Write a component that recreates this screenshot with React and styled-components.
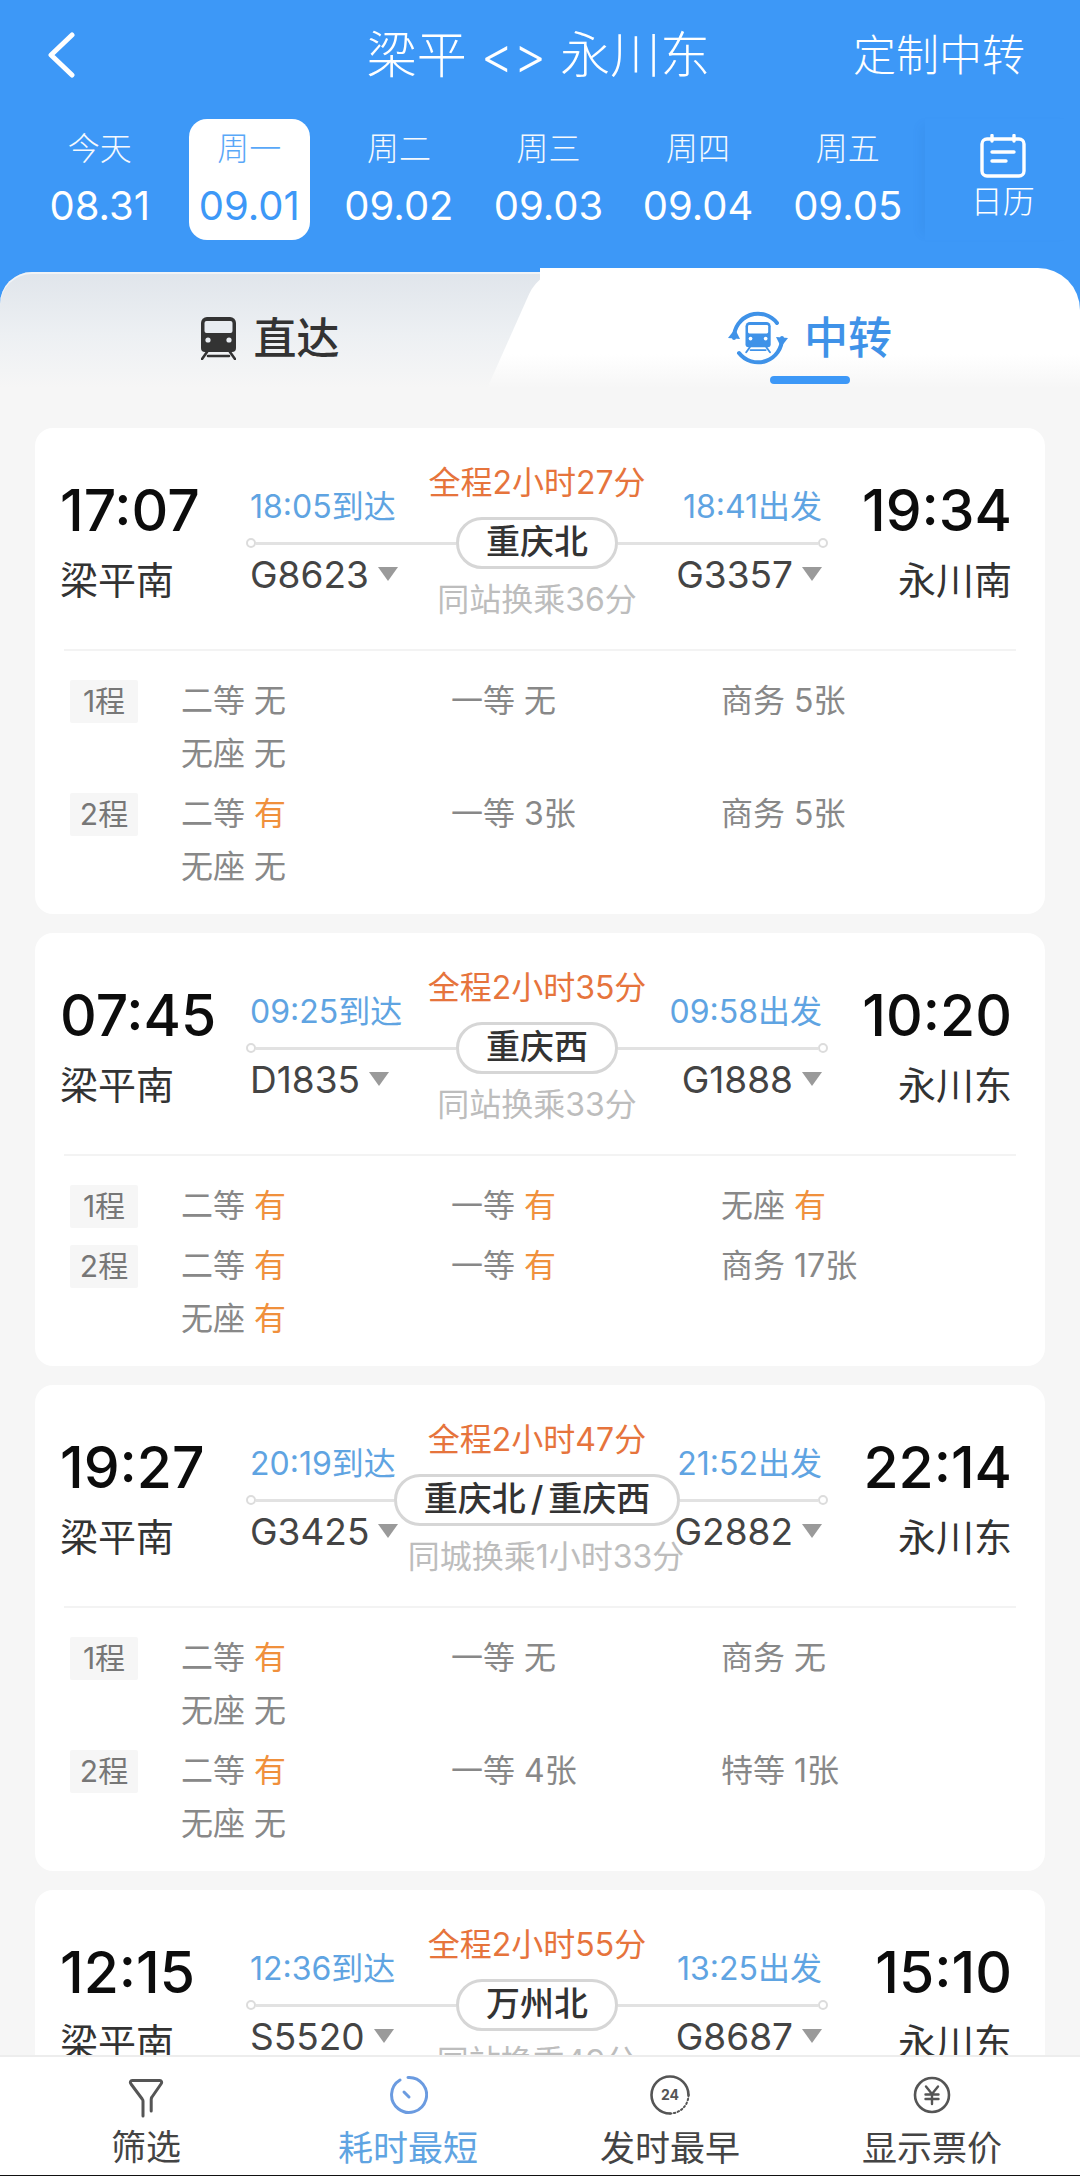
import React from "react";
import styled, { createGlobalStyle } from "styled-components";

const Global = createGlobalStyle`
  html, body { margin: 0; padding: 0; background: #f6f6f6; }
  * { box-sizing: border-box; }
`;

const BLUE = "#3d98f7";

const Page = styled.div`
  width: 1080px;
  height: 2176px;
  display: flex;
  flex-direction: column;
  overflow: hidden;
  background: #f6f6f6;
  font-family: Inter, "Noto Sans CJK SC", sans-serif;
`;

const Header = styled.header`
  flex: none;
  height: 268px;
  background: ${BLUE};
  color: #fff;
`;

const TitleRow = styled.div`
  height: 119px;
  padding: 0 55px 9px 46px;
  display: grid;
  grid-template-columns: 1fr auto 1fr;
  align-items: center;
`;

const BackButton = styled.div`
  display: flex;
  align-items: center;
`;

const Title = styled.h1`
  margin: 0 0 0 6px;
  font-size: 50px;
  font-weight: 300;
  line-height: 60px;
  white-space: pre;
`;

const Custom = styled.div`
  justify-self: end;
  font-size: 43px;
  font-weight: 300;
  line-height: 60px;
`;

const DateRow = styled.div`
  display: flex;
  padding-left: 25px;
`;

const DateCell = styled.div`
  width: 150px;
  height: 121px;
  display: flex;
  flex-direction: column;
  align-items: center;
  padding-top: 9px;
`;

const DateInner = styled.div`
  width: 121px;
  height: 121px;
  margin-top: -9px;
  padding-top: 10px;
  border-radius: 18px;
  text-align: center;
  background: ${(p) => (p.$active ? "#fff" : "transparent")};
  color: ${(p) => (p.$active ? BLUE : "#fff")};
`;

const DateLabel = styled.div`
  font-size: 32px;
  line-height: 40px;
  font-weight: 300;
  opacity: ${(p) => (p.$active ? 0.85 : 0.95)};
`;

const DateValue = styled.div`
  margin: 17px -10px 0;
  font-size: 40px;
  line-height: 40px;
  white-space: nowrap;
`;

const CalendarCell = styled.div`
  width: 155px;
  height: 121px;
  margin-left: 3px;
  display: flex;
  flex-direction: column;
  align-items: center;
  padding-top: 15px;
  box-shadow: -10px 0 10px -6px rgba(30, 90, 160, 0.07);
`;

const CalendarLabel = styled.div`
  font-size: 32px;
  line-height: 36px;
  font-weight: 300;
  margin-top: 6px;
`;

const TabBar = styled.div`
  flex: none;
  height: 120px;
  background: ${BLUE};
  display: grid;
  grid-template-columns: 540px 540px;
`;

const DirectTab = styled.div`
  margin-top: 4px;
  margin-right: -60px;
  padding-right: 60px;
  border-radius: 32px 0 0 0;
  background: linear-gradient(#e0e5eb 0%, #edf0f3 55%, #f6f6f6 100%);
  box-shadow: inset 0 2px 0 rgba(255, 255, 255, 0.55);
  display: flex;
  align-items: center;
  justify-content: center;
  gap: 18px;
  padding-top: 16px;
  font-size: 43px;
  font-weight: 500;
  line-height: 60px;
  color: #333;
`;

const TransferTab = styled.div`
  position: relative;
  z-index: 1;
  border-radius: 0 42px 0 0;
  background: linear-gradient(#fff 0%, #fff 72%, #f6f6f6 100%);
  display: flex;
  align-items: center;
  justify-content: center;
  gap: 16px;
  padding-top: 20px;
  font-size: 44px;
  font-weight: 500;
  line-height: 60px;
  color: #3f92e8;

  &::before {
    content: "";
    position: absolute;
    top: 0;
    bottom: 0;
    left: -26px;
    width: 80px;
    border-radius: 26px 0 0 0;
    background: inherit;
    transform: skewX(-24deg);
    z-index: -1;
  }
`;

const TabUnderline = styled.span`
  position: absolute;
  left: 230px;
  bottom: 4px;
  width: 80px;
  height: 8px;
  border-radius: 4px;
  background: ${BLUE};
`;

const List = styled.main`
  flex: 1;
  min-height: 0;
  overflow: hidden;
  padding: 40px 35px 0;
  display: flex;
  flex-direction: column;
  gap: 19px;
`;

const Card = styled.article`
  flex: none;
  background: #fff;
  border-radius: 18px;
  padding: 34px 29px 21px;
`;

const TopRow = styled.div`
  display: grid;
  grid-template-columns: 186px 582px 1fr;
  margin: 0 4px 0 -4px;
  height: 154px;
`;

const Endpoint = styled.div`
  display: flex;
  flex-direction: column;
  align-items: ${(p) => (p.$end ? "flex-end" : "flex-start")};
`;

const Time = styled.div`
  margin-top: 20px;
  font-size: 57px;
  line-height: 58px;
  font-weight: 500;
  color: #0c0c0c;
  white-space: nowrap;
`;

const Station = styled.div`
  margin-top: 20px;
  font-size: 38px;
  line-height: 40px;
  color: #333;
`;

const Route = styled.div`
  display: grid;
  grid-template-columns: repeat(3, minmax(0, 1fr));
  grid-template-rows: 55px 52px auto;
`;

const StopTime = styled.div`
  align-self: end;
  margin: ${(p) => (p.$end ? "0 6px 0 0" : "0 0 0 4px")};
  font-size: 32px;
  line-height: 20px;
  white-space: nowrap;
  color: #5fa4e2;
  justify-self: ${(p) => (p.$end ? "end" : "start")};
`;

const Duration = styled.div`
  justify-self: center;
  align-self: start;
  font-size: 32px;
  line-height: 40px;
  white-space: nowrap;
  color: #e6743c;
  margin-top: 1px;
`;

const Track = styled.div`
  grid-column: 1 / -1;
  display: flex;
  align-items: center;
`;

const Dot = styled.span`
  flex: none;
  width: 10px;
  height: 10px;
  border-radius: 50%;
  border: 2px solid #dcdcdc;
  background: #fff;
`;

const Line = styled.span`
  flex: 1;
  height: 3px;
  background: #e2e2e2;
`;

const Hub = styled.div`
  flex: none;
  height: 52px;
  padding: 0 27px;
  border: 3px solid #d6d6d6;
  border-radius: 26px;
  font-size: 34px;
  line-height: 44px;
  font-weight: 500;
  word-spacing: -4px;
  color: #333;
  white-space: nowrap;
`;

const Train = styled.div`
  display: flex;
  align-items: center;
  gap: 9px;
  justify-self: ${(p) => (p.$end ? "end" : "start")};
  margin: ${(p) => (p.$end ? "-13px 6px 0 0" : "-13px 0 0 4px")};
  height: 38px;
  font-size: 37px;
  line-height: 38px;
  color: #444;
  white-space: nowrap;
`;

const Caret = styled.span`
  width: 0;
  height: 0;
  margin-top: -2px;
  border-left: 10px solid transparent;
  border-right: 10px solid transparent;
  border-top: 14px solid #9a9a9a;
`;

const Transfer = styled.div`
  justify-self: center;
  margin-top: 13px;
  margin-left: ${(p) => p.$nudge || 0}px;
  font-size: 32px;
  line-height: 36px;
  color: #bdbdbd;
  white-space: nowrap;
`;

const Divider = styled.div`
  height: 2px;
  background: #f3f3f3;
  margin-top: 33px;
`;

const SeatBlock = styled.div`
  padding-top: 23px;
  display: flex;
  flex-direction: column;
  gap: 7px;
`;

const Leg = styled.div`
  display: grid;
  grid-template-columns: 117px 270px 270px 270px;
  grid-auto-rows: 53px;
  align-items: center;
`;

const LegTag = styled.div`
  grid-row: 1;
  grid-column: 1;
  align-self: start;
  margin: 6px 0 0 6px;
  width: 68px;
  height: 43px;
  background: #f6f6f6;
  font-size: 30px;
  line-height: 43px;
  text-align: center;
  color: #777;
  border-radius: 2px;
`;

const Seat = styled.div`
  font-size: 32px;
  line-height: 40px;
  color: #888;
  white-space: pre;
  grid-column: ${(p) => p.$col};
`;

const SeatState = styled.span`
  color: ${(p) => (p.$on ? "#f0903c" : "#888")};
`;

const BottomBar = styled.nav`
  flex: none;
  height: 121px;
  position: relative;
  z-index: 2;
  background: #fff;
  border-top: 2px solid #ededed;
  border-bottom: 1px solid #111;
  padding: 0 15px;
  display: grid;
  grid-template-columns: repeat(4, 262px);
`;

const BarItem = styled.div`
  display: flex;
  flex-direction: column;
  align-items: center;
  color: ${(p) => (p.$active ? "#5fa4e2" : "#444")};
`;

const BarIcon = styled.div`
  height: 44px;
  margin-top: ${(p) => (p.$top ?? 16)}px;
  display: flex;
  align-items: center;
`;

const BarLabel = styled.div`
  margin-top: ${(p) => (p.$lift ? 5 : 9)}px;
  font-size: 35px;
  line-height: 44px;
  white-space: nowrap;
`;

const Chevron = () => (
  <svg width="30" height="46" viewBox="0 0 30 46" fill="none" stroke="#fff" strokeWidth="5" strokeLinecap="round" strokeLinejoin="round">
    <path d="M26 3 L5 23 L26 43" />
  </svg>
);

const CalendarIcon = () => (
  <svg width="46" height="44" viewBox="0 0 46 44" fill="none" stroke="#fff" strokeWidth="3.4" strokeLinecap="round">
    <rect x="2" y="5" width="42" height="37" rx="5" />
    <path d="M12 1.5 V7 M34 1.5 V7" />
    <path d="M12 18 H34 M12 27 H26" />
  </svg>
);

const TrainBody = ({ color, light }) => (
  <g>
    <path fill={color} d="M6 0 H29 a6 6 0 0 1 6 6 V31 a4 4 0 0 1 -4 4 H4 a4 4 0 0 1 -4 -4 V6 a6 6 0 0 1 6 -6 Z" />
    <rect x="3.5" y="4" width="28" height="12" rx="2" fill={light} />
    <circle cx="7" cy="23" r="2.6" fill={light} />
    <circle cx="28" cy="23" r="2.6" fill={light} />
    <path d="M6 35 L1 42 M29 35 L34 42 M7 39 H28" stroke={color} strokeWidth="2.6" fill="none" strokeLinecap="round" />
  </g>
);

const DirectIcon = () => (
  <svg width="35" height="43" viewBox="0 0 35 43">
    <TrainBody color="#333" light="#e8ecf1" />
  </svg>
);

const TransferIcon = () => (
  <svg width="60" height="56" viewBox="0 0 60 56" fill="none">
    <path d="M6 28 A24 24 0 0 1 49 13" stroke="#3f92e8" strokeWidth="4" strokeLinecap="round" />
    <path d="M54 28 A24 24 0 0 1 11 43" stroke="#3f92e8" strokeWidth="4" strokeLinecap="round" />
    <path d="M0 28 L7 19 L12 29 Z" fill="#3f92e8" />
    <path d="M60 28 L53 37 L48 27 Z" fill="#3f92e8" />
    <g transform="translate(17.5 12) scale(0.72)">
      <TrainBody color="#3f92e8" light="#fff" />
    </g>
  </svg>
);

const FilterIcon = () => (
  <svg width="36" height="40" viewBox="0 0 36 40" fill="none" stroke="#555" strokeWidth="3" strokeLinecap="round" strokeLinejoin="round">
    <path d="M15 38 V23 a3 3 0 0 0 -.8 -2 L3 6 a2 2 0 0 1 1.6 -3.5 H31.4 A2 2 0 0 1 33 6 L24 19 a4 4 0 0 0 -.8 2.4 V33" />
  </svg>
);

const ClockIcon = () => (
  <svg width="40" height="40" viewBox="0 0 40 40" fill="none" stroke="#6b9be0" strokeWidth="3" strokeLinecap="round">
    <path d="M12 5 A17.5 17.5 0 1 0 20 2.5" />
    <path d="M16 17 L21 22" />
  </svg>
);

const EarlyText = styled.text`
  font-family: Inter, sans-serif;
  font-size: 14px;
  font-weight: 700;
  fill: #555;
`;

const EarlyIcon = () => (
  <svg width="42" height="42" viewBox="0 0 42 42" fill="none" stroke="#555" strokeWidth="2.6" strokeLinecap="round">
    <path d="M21 39.5 A18.5 18.5 0 1 1 39.5 21" />
    <path d="M39.5 21 A18.5 18.5 0 0 1 21 39.5" strokeDasharray="1.5 2.4" strokeWidth="2" />
    <EarlyText x="21" y="26" textAnchor="middle" stroke="none">24</EarlyText>
  </svg>
);

const YenIcon = () => (
  <svg width="38" height="38" viewBox="0 0 38 38" fill="none" stroke="#555" strokeWidth="2.6" strokeLinecap="round" strokeLinejoin="round">
    <circle cx="19" cy="19" r="17" />
    <path d="M13 10.5 L19 18 L25 10.5 M19 18 V28 M12.5 18.5 H25.5 M12.5 23 H25.5" strokeWidth="2.4" />
  </svg>
);

const dates = [
  ["今天", "08.31"],
  ["周一", "09.01"],
  ["周二", "09.02"],
  ["周三", "09.03"],
  ["周四", "09.04"],
  ["周五", "09.05"],
];

const trips = [
  {
    dep: "17:07", from: "梁平南", arrive: "18:05到达", t1: "G8623", total: "全程2小时27分", hub: "重庆北",
    transfer: "同站换乘36分", depart: "18:41出发", t2: "G3357", arr: "19:34", to: "永川南",
    legs: [
      [["二等", "无"], ["一等", "无"], ["商务", "5张"], ["无座", "无"]],
      [["二等", "有"], ["一等", "3张"], ["商务", "5张"], ["无座", "无"]],
    ],
  },
  {
    dep: "07:45", from: "梁平南", arrive: "09:25到达", t1: "D1835", total: "全程2小时35分", hub: "重庆西",
    transfer: "同站换乘33分", depart: "09:58出发", t2: "G1888", arr: "10:20", to: "永川东",
    legs: [
      [["二等", "有"], ["一等", "有"], ["无座", "有"]],
      [["二等", "有"], ["一等", "有"], ["商务", "17张"], ["无座", "有"]],
    ],
  },
  {
    dep: "19:27", from: "梁平南", arrive: "20:19到达", t1: "G3425", total: "全程2小时47分", hub: "重庆北 / 重庆西",
    transfer: "同城换乘1小时33分", nudge: 18, depart: "21:52出发", t2: "G2882", arr: "22:14", to: "永川东",
    legs: [
      [["二等", "有"], ["一等", "无"], ["商务", "无"], ["无座", "无"]],
      [["二等", "有"], ["一等", "4张"], ["特等", "1张"], ["无座", "无"]],
    ],
  },
  {
    dep: "12:15", from: "梁平南", arrive: "12:36到达", t1: "S5520", total: "全程2小时55分", hub: "万州北",
    transfer: "同站换乘49分", depart: "13:25出发", t2: "G8687", arr: "15:10", to: "永川东",
    legs: [],
  },
];

const TripCard = ({ trip }) => (
  <Card>
    <TopRow>
      <Endpoint>
        <Time>{trip.dep}</Time>
        <Station>{trip.from}</Station>
      </Endpoint>
      <Route>
        <StopTime>{trip.arrive}</StopTime>
        <Duration>{trip.total}</Duration>
        <StopTime $end>{trip.depart}</StopTime>
        <Track>
          <Dot />
          <Line />
          <Hub>{trip.hub}</Hub>
          <Line />
          <Dot />
        </Track>
        <Train>{trip.t1}<Caret /></Train>
        <Transfer $nudge={trip.nudge}>{trip.transfer}</Transfer>
        <Train $end>{trip.t2}<Caret /></Train>
      </Route>
      <Endpoint $end>
        <Time>{trip.arr}</Time>
        <Station>{trip.to}</Station>
      </Endpoint>
    </TopRow>
    <Divider />
    <SeatBlock>
      {trip.legs.map((seats, i) => (
        <Leg key={i}>
          <LegTag>{i + 1}程</LegTag>
          {seats.map(([name, state], j) => (
            <Seat key={name} $col={j % 3 + 2}>
              {name} <SeatState $on={state === "有"}>{state}</SeatState>
            </Seat>
          ))}
        </Leg>
      ))}
    </SeatBlock>
  </Card>
);

export default function App() {
  return (
    <Page>
      <Global />
      <Header>
        <TitleRow>
          <BackButton><Chevron /></BackButton>
          <Title>梁平 &lt;&gt; 永川东</Title>
          <Custom>定制中转</Custom>
        </TitleRow>
        <DateRow>
          {dates.map(([label, value], i) => (
            <DateCell key={value}>
              <DateInner $active={i === 1}>
                <DateLabel $active={i === 1}>{label}</DateLabel>
                <DateValue>{value}</DateValue>
              </DateInner>
            </DateCell>
          ))}
          <CalendarCell>
            <CalendarIcon />
            <CalendarLabel>日历</CalendarLabel>
          </CalendarCell>
        </DateRow>
      </Header>
      <TabBar>
        <DirectTab>
          <DirectIcon />
          直达
        </DirectTab>
        <TransferTab>
          <TransferIcon />
          中转
          <TabUnderline />
        </TransferTab>
      </TabBar>
      <List>
        {trips.map((t) => (
          <TripCard key={t.dep} trip={t} />
        ))}
      </List>
      <BottomBar>
        <BarItem>
          <BarIcon $top={19}><FilterIcon /></BarIcon>
          <BarLabel $lift>筛选</BarLabel>
        </BarItem>
        <BarItem $active>
          <BarIcon><ClockIcon /></BarIcon>
          <BarLabel>耗时最短</BarLabel>
        </BarItem>
        <BarItem>
          <BarIcon><EarlyIcon /></BarIcon>
          <BarLabel>发时最早</BarLabel>
        </BarItem>
        <BarItem>
          <BarIcon><YenIcon /></BarIcon>
          <BarLabel>显示票价</BarLabel>
        </BarItem>
      </BottomBar>
    </Page>
  );
}
